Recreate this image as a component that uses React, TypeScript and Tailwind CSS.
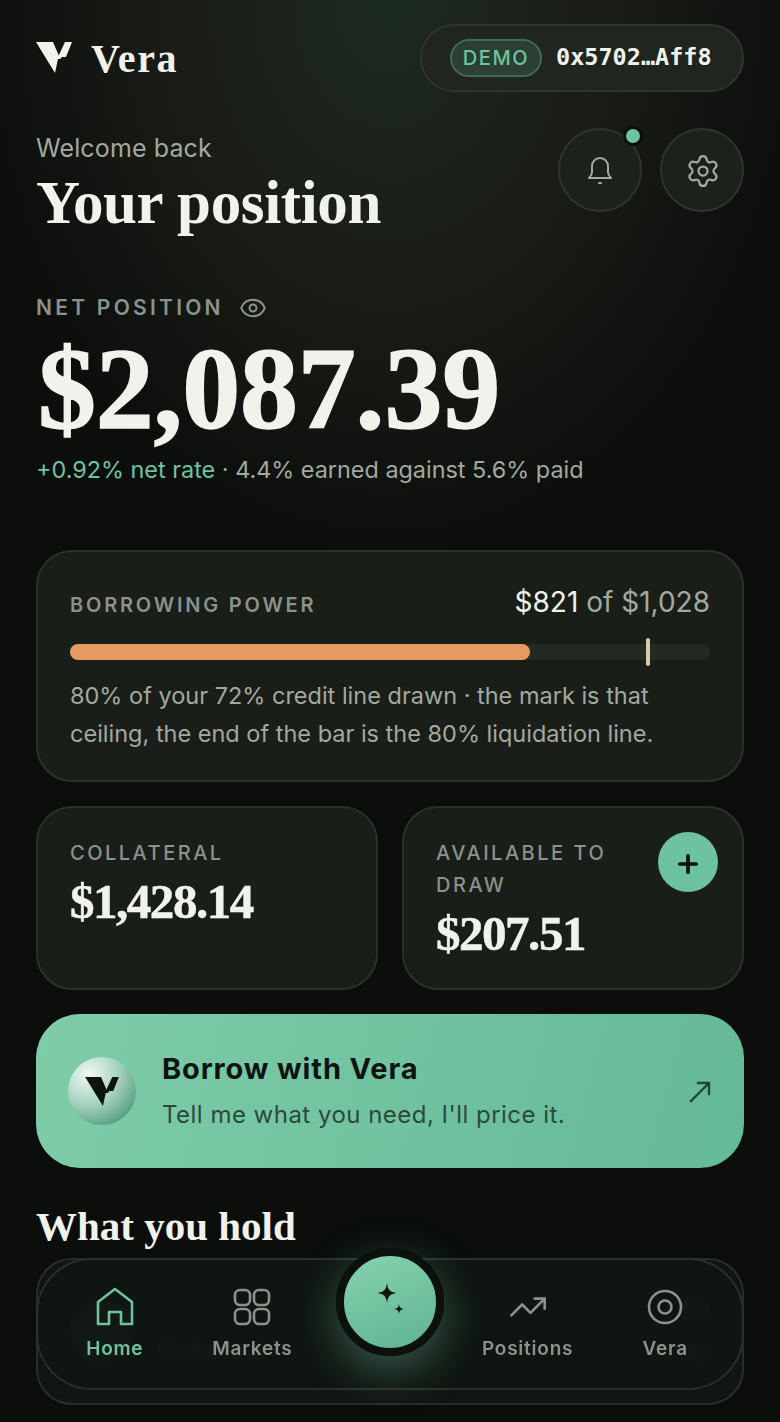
import React from 'react';
import { Eye, Settings, TrendingUp, Plus } from 'lucide-react';

const serif = "font-['Liberation_Serif',serif] font-bold";
const sans = "font-['Inter',sans-serif]";

const VeraMark: React.FC<{ className?: string; fill: string }> = ({ className, fill }) => (
  <svg viewBox="0 0 36 32" className={className} fill={fill}>
    <path d="M0 0H17L23 14H27L24 17H22L19 31Z" />
    <path d="M29 0H36L30 15H22Z" />
  </svg>
);

const SmallCard: React.FC<{ label: string; value: string; children?: React.ReactNode }> = ({ label, value, children }) => (
  <div className="relative h-[184px] rounded-[36px] border-2 border-[#2c302b] bg-[#1a1e19] px-8 pt-[29px]">
    <div className={`${sans} pr-[70px] text-[20px] leading-8 font-medium tracking-[0.125em] text-[#8b918b] uppercase`}>{label}</div>
    <div className={`${serif} mt-[3px] text-[49px] leading-[60px] tracking-[-0.03em] text-[#f0f3ec] [-webkit-text-stroke:0.5px_#f0f3ec]`}>{value}</div>
    {children}
  </div>
);

const NavItem: React.FC<{ label: string; active?: boolean; children?: React.ReactNode }> = ({ label, active, children }) => (
  <div className={`flex flex-col items-center ${active ? 'text-[#6dc3a0]' : 'text-[#8b918b]'}`}>
    <div className="flex h-10 w-10 items-center justify-center">{children}</div>
    <div className={`${sans} mt-[10px] text-[19px] leading-6 font-semibold tracking-[0.04em]`}>{label}</div>
  </div>
);

export default function App() {
  return (
    <div className="relative h-[1422px] w-[780px] overflow-hidden bg-[#0b0e0b]">
      <div className="absolute inset-x-0 top-0 h-[700px] bg-[radial-gradient(ellipse_420px_560px_at_50%_0%,#1c2a21_0%,#1b1e18_45%,#0b0e0b_100%)]" />
      <div className="relative px-9 pt-6">
        {/* Header */}
        <div className="flex items-center justify-between">
          <div className="flex items-center gap-[19px]">
            <VeraMark className="h-8 w-9" fill="#f0f3ec" />
            <span className={`${serif} mt-[2px] text-[40px] leading-none tracking-[0.04em] text-[#f0f3ec]`}>Vera</span>
          </div>
          <div className="flex h-[68px] w-[324px] items-center rounded-full border-2 border-[#30342f] bg-[#20251f] pl-[28px]">
            <span className={`${sans} flex h-[38px] w-[92px] items-center justify-center rounded-full border-2 border-[#3c6a55] bg-[#2b3f33] text-[20px] font-medium tracking-[0.08em] text-[#6dc3a0]`}>DEMO</span>
            <span className="ml-[14px] font-['DejaVu_Sans_Mono',monospace] text-[23.5px] font-bold text-[#f0f3ec]">0x5702…Aff8</span>
          </div>
        </div>

        {/* Welcome */}
        <div className="mt-9 flex items-start justify-between">
          <div>
            <div className={`${sans} text-[25px] leading-10 tracking-[0.005em] text-[#a3a99f]`}>Welcome back</div>
            <h1 className={`${serif} mt-[4px] text-[61px] leading-[62px] tracking-[-0.006em] text-[#f0f3ec]`}>Your position</h1>
          </div>
          <div className="flex gap-[18px]">
            <div className="relative flex h-[84px] w-[84px] items-center justify-center rounded-full border-2 border-[#30342f] bg-[#1c211c] text-[#a3a99f]">
              <svg viewBox="0 0 28 32" className="h-8 w-7" fill="none" stroke="currentColor" strokeWidth="2" strokeLinecap="round" strokeLinejoin="round">
                <path d="M6 18V12a8 8 0 0 1 16 0v6c0 2.500 1 4 3 6H3c2-2 3-3.500 3-6Z" />
                <path d="M13 29h2" />
              </svg>
              <span className="absolute top-[-4px] right-[-3px] h-5 w-5 rounded-full border-[3px] border-[#0b0e0b] bg-[#6dc3a0]" />
            </div>
            <div className="flex h-[84px] w-[84px] items-center justify-center rounded-full border-2 border-[#30342f] bg-[#1c211c] text-[#a3a99f]">
              <Settings className="mt-[2px] ml-[2px] h-[36px] w-[36px]" strokeWidth={1.5} />
            </div>
          </div>
        </div>

        {/* Net position */}
        <div className="mt-[60px] flex items-center gap-[15px]">
          <span className={`${sans} text-[21px] leading-7 font-semibold tracking-[0.155em] text-[#8b918b]`}>NET POSITION</span>
          <Eye className="h-7 w-7 text-[#8b918b]" strokeWidth={1.75} />
        </div>
        <div className={`${serif} mt-[7px] ml-[2px] text-[116px] leading-[120px] tracking-[-0.002em] text-[#f0f3ec] [-webkit-text-stroke:1.5px_#f0f3ec]`}>$2,087.39</div>
        <div className={`${sans} mt-[5px] text-[23.4px] leading-8 text-[#a3a99f]`}>
          <span className="text-[#6dc3a0]">+0.92% net rate</span> · 4.4% earned against 5.6% paid
        </div>

        {/* Borrowing power */}
        <div className="mt-[64px] h-[232px] rounded-[36px] border-2 border-[#2c302b] bg-[#1a1e19] px-8 pt-[30px]">
          <div className="flex items-center justify-between">
            <span className={`${sans} pt-[6px] text-[20px] font-semibold tracking-[0.14em] text-[#8b918b]`}>BORROWING POWER</span>
            <span className={`${sans} text-[28px] leading-10 text-[#a3a99f]`}>
              <span className="text-[#f0f3ec]">$821</span> of $1,028
            </span>
          </div>
          <div className="relative mt-[22px] h-4 rounded-full bg-[#222a23]">
            <div className="h-4 w-[460px] rounded-full bg-[#e59a62]" />
            <div className="absolute top-[-6px] left-[576px] h-7 w-[4px] rounded-full bg-[#d8c8ae]" />
          </div>
          <p className={`${sans} mt-[17px] text-[23.5px] leading-[38px] text-[#a3a99f]`}>
            80% of your 72% credit line drawn · the mark is that ceiling, the end of the bar is the 80% liquidation line.
          </p>
        </div>

        {/* Collateral and available */}
        <div className="mt-6 grid grid-cols-2 gap-6">
          <SmallCard label="Collateral" value="$1,428.14" />
          <SmallCard label="Available to draw" value="$207.51">
            <div className="absolute top-6 right-6 flex h-[60px] w-[60px] items-center justify-center rounded-full bg-[#6dc3a0] text-[#0f1410]">
              <Plus className="mt-1 h-[28px] w-[28px]" strokeWidth={3.2} />
            </div>
          </SmallCard>
        </div>

        {/* Borrow CTA */}
        <div className="mt-6 flex h-[154px] items-center rounded-[44px] bg-[linear-gradient(105deg,#7fcca9,#64b997)] pr-[32px] pl-8">
          <div className="flex h-[68px] w-[68px] shrink-0 items-center justify-center rounded-full bg-[radial-gradient(circle_at_30%_25%,#f0f7f3_0%,#a9d6c0_42%,#3d8d6e_92%)]">
            <VeraMark className="mt-[2px] h-[30px] w-[34px]" fill="#0f1410" />
          </div>
          <div className="ml-[26px] flex-1">
            <div className={`${sans} text-[29px] leading-9 font-bold tracking-[0.03em] text-[#0f1410]`}>Borrow with Vera</div>
            <div className={`${sans} mt-[12px] text-[24px] leading-8 tracking-[0.02em] text-[#2b4a3c]`}>Tell me what you need, I'll price it.</div>
          </div>
          <svg viewBox="0 0 24 24" className="h-6 w-6 text-[#24463a]" fill="none" stroke="currentColor" strokeWidth="2.400" strokeLinecap="square">
            <path d="M3 22 20 5M10 4h11v11" />
          </svg>
        </div>

        {/* What you hold */}
        <h2 className={`${serif} mt-[35px] text-[41px] leading-[46px] text-[#f0f3ec]`}>What you hold</h2>
        <div className="mt-[9px] flex h-[147px] items-center justify-between rounded-[36px] border-2 border-[#2a2e29] bg-[#121612] px-8">
          <div className="flex items-center gap-6">
            <div className="h-16 w-16 rounded-full bg-[#262c27]" />
            <span className={`${sans} mt-9 text-[24px] text-[#3e443e]`}>Collateral</span>
          </div>
          <div className={`${sans} text-right text-[24px] leading-[42px] text-[#3e443e]`}>
            <div>$0</div>
            <div>0.412</div>
          </div>
        </div>
      </div>

      {/* Bottom nav */}
      <div className="absolute bottom-8 left-9 h-[132px] w-[708px] rounded-[56px] border-2 border-[#2c302b] bg-[#0f1510]/85 px-2 pt-[27px] backdrop-blur-[2px]">
        <div className="grid grid-cols-5">
          <NavItem label="Home" active>
            <svg viewBox="0 0 40 40" className="h-10 w-10" fill="none" stroke="currentColor" strokeWidth="2.600" strokeLinejoin="round">
              <path d="M3 15 20 2l17 13v22H26V25H14v12H3Z" />
            </svg>
          </NavItem>
          <NavItem label="Markets">
            <svg viewBox="0 0 40 40" className="h-10 w-10" fill="none" stroke="currentColor" strokeWidth="2.600">
              <rect x="3" y="3" width="15" height="15" rx="5" />
              <rect x="22" y="3" width="15" height="15" rx="5" />
              <rect x="3" y="22" width="15" height="15" rx="5" />
              <rect x="22" y="22" width="15" height="15" rx="5" />
            </svg>
          </NavItem>
          <div />
          <NavItem label="Positions">
            <TrendingUp className="h-10 w-10" strokeWidth={1.6} />
          </NavItem>
          <NavItem label="Vera">
            <svg viewBox="0 0 40 40" className="h-10 w-10" fill="none" stroke="currentColor" strokeWidth="2.600">
              <circle cx="20" cy="20" r="16" />
              <circle cx="20" cy="20" r="6.500" />
            </svg>
          </NavItem>
        </div>
        <div className="absolute top-[-12px] left-[298px] flex h-[108px] w-[108px] items-center justify-center rounded-full border-8 border-[#0d110e] bg-[linear-gradient(160deg,#86d1af,#5fb492)] shadow-[0_14px_44px_rgba(109,195,160,0.4)]">
          <svg viewBox="0 0 40 40" className="ml-[2px] mt-[-2px] h-10 w-10" fill="#0f1410">
            <path d="M16 2c1 7 3 9 9.500 10-6.500 1-8.500 3-9.500 10-1-7-3-9-9.500-10C13 11 15 9 16 2Z" />
            <path d="M28 23c.5 3.500 1.500 4.500 5 5-3.500.5-4.500 1.500-5 5-.5-3.500-1.500-4.500-5-5 3.500-.5 4.500-1.500 5-5Z" />
          </svg>
        </div>
      </div>
    </div>
  );
}
